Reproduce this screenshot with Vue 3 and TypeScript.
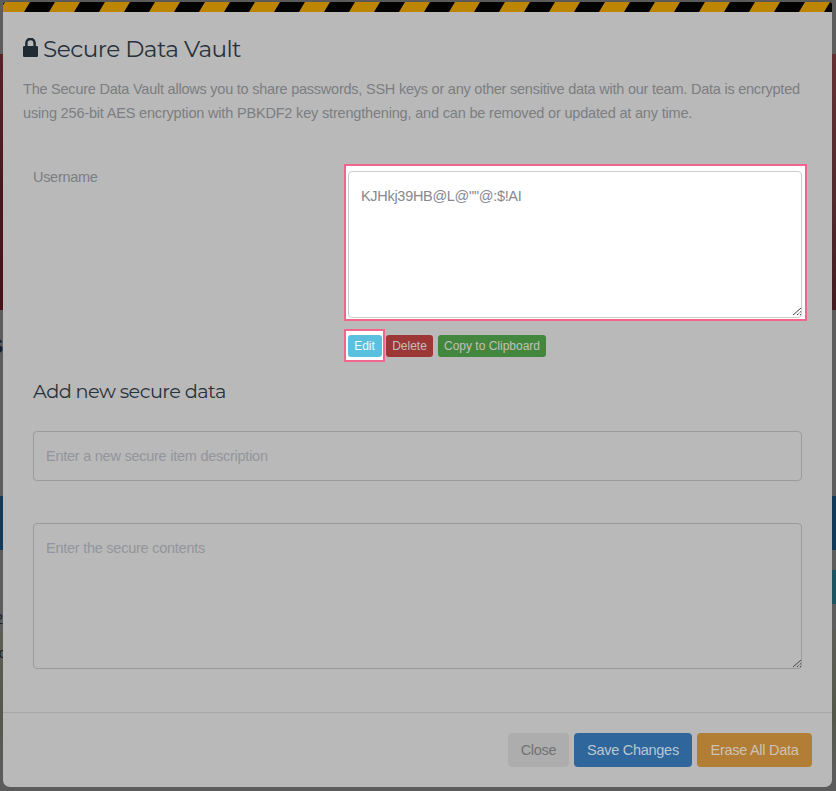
<script setup lang="ts">
import { ref } from 'vue'

const secret = ref('KJHkj39HB@L@""@:$!AI')
const description = ref('')
const contents = ref('')
</script>

<template>
  <div class="page">
    <div class="edge left">
      <i class="gray e1"></i><i class="red e2"></i><i class="gray e3"><b class="frag big">S</b></i><i class="blue e4"></i><i class="gray e5"><b class="frag two">2</b></i><i class="olive e6"><b class="frag cee">c</b></i>
    </div>
    <main class="modal">
      <svg class="hazard" width="829" height="10" aria-hidden="true">
        <defs>
          <pattern id="stripes" width="50" height="10" patternUnits="userSpaceOnUse">
            <rect width="50" height="10" fill="#bd8504" />
            <path d="M27 0H52L46 10H21ZM-23 0H2L-4 10H-29Z" fill="#030302" />
          </pattern>
        </defs>
        <rect width="829" height="10" fill="url(#stripes)" />
      </svg>
      <header>
        <h1>
          <svg class="lock" width="15" height="20" viewBox="0 0 15 20" aria-hidden="true">
            <path d="M3.4 10V5a4.1 4.1 0 0 1 8.2 0V10" fill="none" stroke="#1e2b35" stroke-width="2.5" />
            <rect y="8" width="15" height="11" rx="1.2" fill="#1e2b35" />
          </svg>
          <span>Secure Data Vault</span>
        </h1>
        <p><span class="line1">The Secure Data Vault allows you to share passwords, SSH keys or any other sensitive data with our team. Data is encrypted</span><br /><span class="line2">using 256-bit AES encryption with PBKDF2 key strengthening, and can be removed or updated at any time.</span></p>
      </header>
      <section class="item">
        <label for="secret">Username</label>
        <div class="value">
          <div class="focus area">
            <textarea id="secret" v-model="secret" spellcheck="false"></textarea>
            <svg class="grip" width="10" height="9" viewBox="0 0 10 9"><path d="M1 8 9 1M5 8l1.6-1.4M7.6 5.6 9 4.4M8 8l1-.8" /></svg>
          </div>
          <div class="actions">
            <span class="focus small"><button class="xs edit">Edit</button></span>
            <button class="xs delete">Delete</button>
            <button class="xs copy">Copy to Clipboard</button>
          </div>
        </div>
      </section>
      <section class="new">
        <h2>Add new secure data</h2>
        <input v-model="description" class="field" placeholder="Enter a new secure item description" />
        <div class="contents">
          <textarea v-model="contents" class="field" placeholder="Enter the secure contents"></textarea>
          <svg class="grip" width="10" height="9" viewBox="0 0 10 9"><path d="M1 8 9 1M5 8l1.6-1.4M7.6 5.6 9 4.4M8 8l1-.8" /></svg>
        </div>
      </section>
      <footer>
        <button class="btn close">Close</button>
        <button class="btn save">Save Changes</button>
        <button class="btn erase">Erase All Data</button>
      </footer>
    </main>
    <div class="edge right">
      <i class="gray e1"></i><i class="red e2"></i><i class="gray r3"></i><i class="blue r4"></i><i class="gray r5"></i><i class="teal r6"></i><i class="gray r7"></i><i class="olive e6"></i>
    </div>
  </div>
</template>

<style>
body { margin: 0; overflow: hidden; }
</style>

<style scoped>
* { box-sizing: border-box; }
.page { width: 836px; height: 791px; display: grid; grid-template-columns: 3px 829px 4px; background: #5b5b5b; font-family: "Liberation Sans", Arial, sans-serif; color: #7b7e82; overflow: hidden; }
.edge { display: flex; flex-direction: column; overflow: hidden; }
.edge i { display: block; flex: none; font-style: normal; position: relative; }
.gray { background: #5d5d5d; }
.red { background: linear-gradient(#5b2225, #4c171c 50%, #481116); }
.blue { background: #10395a; }
.teal { background: #1d5462; }
.olive { background: linear-gradient(#5d5d56, #53584a 60%, #5b5b5b); }
.right .red { background: linear-gradient(#633033, #512b2e 55%, #421b20); }
.e1 { height: 54px; }
.e2 { height: 256px; }
.e3 { height: 186px; }
.e4, .r4 { height: 54px; }
.e5 { height: 80px; }
.e6 { height: 140px; }
.r3 { height: 186px; }
.r5 { height: 20px; }
.r6 { height: 34px; }
.r7 { height: 26px; }
.frag { position: absolute; right: 0; color: #18202a; line-height: 1; }
.big { top: 26px; font-size: 20px; }
.two { top: 61px; font-size: 15px; font-weight: 400; }
.cee { top: 15px; right: -3px; font-size: 15px; font-weight: 400; }
.modal { margin-top: 2px; height: 785px; background: #b9b9b9; border-radius: 2px 2px 7px 7px; overflow: hidden; display: flex; flex-direction: column; }
.hazard { display: block; flex: none; }
header { padding: 23px 20px 0; height: 152px; }
h1, h2 { margin: 0; color: #28323c; font-family: Montserrat, Inter, sans-serif; font-weight: 400; white-space: nowrap; }
h1 { display: flex; align-items: center; gap: 5px; font-size: 23.2px; line-height: 28px; letter-spacing: -0.54px; }
.lock { flex: none; margin-bottom: 2px; }
p { margin: 14px 0 0; font-size: 14.5px; line-height: 24px; white-space: nowrap; letter-spacing: -0.18px; }
.line1 { letter-spacing: -0.23px; }
.item { display: flex; padding: 0 25px 0 30px; height: 200px; }
.item label { width: 311px; padding-top: 4px; font-size: 14.5px; line-height: 18px; letter-spacing: -0.3px; }
.focus { border: 2.5px solid #f2668e; background: #fff; }
.area { position: relative; width: 463px; height: 157px; padding: 5px 3px 1px 2px; }
textarea, input { display: block; margin: 0; outline: 0; resize: none; font-family: inherit; border-radius: 4px; color: #777a80; letter-spacing: -0.25px; }
.area textarea { width: 454px; height: 147px; border: 1px solid #ccc; padding: 14px 12px; font-size: 14.5px; line-height: 20px; background: #fff; color: #85898f; letter-spacing: -0.3px; }
.grip { position: absolute; fill: none; stroke: #444; stroke-width: 1; }
.area .grip { right: 3px; bottom: 3px; }
.actions { display: flex; align-items: center; height: 33px; margin-top: 8px; }
.small { display: flex; width: 41px; height: 33px; align-items: center; justify-content: center; margin-right: 1px; }
button { border: 0; padding: 0; font-family: inherit; white-space: nowrap; }
.xs { height: 22px; border-radius: 3px; font-size: 12px; color: #c3bfbf; }
.edit { width: 34px; background: #5bc0de; color: #eefaff; }
.delete { width: 47px; background: #9d3735; margin-right: 5px; }
.copy { width: 108px; background: #43873f; }
.new { padding: 0 30px; height: 348px; }
h2 { font-size: 19.3px; line-height: 24px; padding-top: 15px; letter-spacing: -0.58px; }
.field { width: 769px; border: 1px solid #999b9e; background: transparent; padding: 0 12px; font-size: 14.5px; }
.field::placeholder { color: #92959b; opacity: 1; }
input.field { height: 50px; margin-top: 28px; }
.contents { position: relative; margin-top: 42px; width: 769px; }
textarea.field { height: 146px; padding-top: 14px; line-height: 20px; }
.contents .grip { right: 0; bottom: 1px; }
footer { height: 75px; border-top: 1px solid #a6a6a6; padding: 20px 20px 0; display: flex; justify-content: flex-end; gap: 5px; }
.btn { height: 34px; border-radius: 4px; font-size: 14.5px; letter-spacing: -0.28px; }
.close { width: 61px; background: #adadad; color: #707275; }
.save { width: 118px; background: #2f679d; color: #bdc6ce; }
.erase { width: 115px; background: #b27d34; color: #cdc3b5; }
</style>
